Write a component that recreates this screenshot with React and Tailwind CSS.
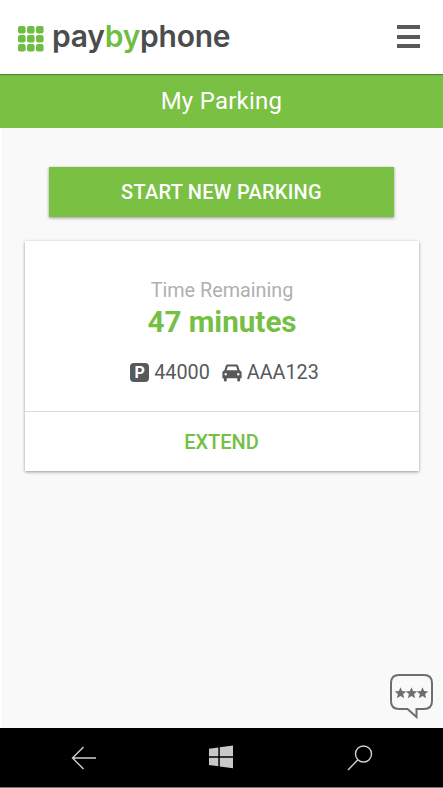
import React from 'react';

const dots = [0, 9, 18];
const star = 'M0-5.8 1.6-2 5.8-1.6 2.6 1.1 3.6 5.2 0 3-3.6 5.2-2.6 1.1-5.8-1.6-1.6-2Z';

function Header() {
  return (
    <header className="relative z-10 flex h-[74px] items-start justify-between bg-white pl-[18px] pr-[23px] shadow-[0_1px_1px_rgba(0,0,0,0.3)]">
      <div className="flex items-start">
        <svg className="mt-[26px] h-[26px] w-[26px]" viewBox="0 0 26 26" fill="#6fbe44">
          {dots.map((y) => dots.map((x) => <rect key={`${x}-${y}`} x={x} y={y} width="7.6" height="7.6" rx="2" />))}
        </svg>
        <div className="ml-[8px] mt-[17px] whitespace-nowrap font-['Inter',sans-serif] text-[30px] leading-[38px] font-semibold tracking-[-0.25px] text-[#4b4c4e]">
          pay<span className="text-[#6fbe44]">by</span>phone
        </div>
      </div>
      <button aria-label="Menu" className="mt-[25px] flex w-[23px] flex-col gap-[5px]">
        <span className="h-[4px] bg-[#58595b]" />
        <span className="mt-px h-[4px] bg-[#58595b]" />
        <span className="h-[4px] bg-[#58595b]" />
      </button>
    </header>
  );
}

function Card() {
  return (
    <section className="ml-[25px] mr-[24px] mt-[24px] flex h-[230px] flex-col bg-white text-center shadow-[0_1px_3px_rgba(0,0,0,0.4)]">
      <div className="flex h-[171px] flex-col items-center border-b border-[#dcdcdc] pt-[38px]">
        <div className="text-[19.8px] leading-[24px] text-[#b0b0b0]">Time Remaining</div>
        <div className="mt-px text-[29.6px] leading-[36px] font-bold text-[#74bf44]">47 minutes</div>
        <div className="mt-[20px] flex items-center pl-[5px] text-[19.8px] leading-[24px] text-[#58595b]">
          <span className="flex h-[19px] w-[19px] items-center justify-center rounded-[4px] bg-[#58595b] text-[16px] leading-[19px] font-bold text-white">P</span>
          <span className="ml-[5px] pt-px">44000</span>
          <svg className="ml-[12px] h-[20px] w-[20px]" viewBox="0 0 20 20" fill="#58595b">
            <path fillRule="evenodd" d="M5.4 1.5H14.6Q15.8 1.5 16.2 2.7L17.6 7.2Q19.6 7.8 19.6 9.6V15.2H18.2V17Q18.2 18.5 16.7 18.5T15.2 17V15.2H4.8V17Q4.8 18.5 3.3 18.5T1.8 17V15.2H.4V9.6Q.4 7.8 2.4 7.2L3.8 2.7Q4.2 1.5 5.4 1.5ZM5.8 3.4 4.6 7.2H15.4L14.2 3.4ZM3.7 10a1.2 1.2 0 1 0 0 2.4 1.2 1.2 0 0 0 0-2.4ZM16.3 10a1.2 1.2 0 1 0 0 2.4 1.2 1.2 0 0 0 0-2.4Z" />
          </svg>
          <span className="ml-[5px] pt-px">AAA123</span>
        </div>
      </div>
      <button className="flex-1 pr-px text-[20px] font-medium text-[#74bf44]">EXTEND</button>
    </section>
  );
}

function NavBar() {
  return (
    <nav className="flex h-[60px] items-start justify-between border-b border-[#777] bg-black pl-[71px] pr-[70px]">
      <svg className="mt-[18px] h-[24px] w-[26px]" viewBox="0 0 26 24" fill="none" stroke="#cfcfcf" strokeWidth="1.4">
        <path d="M25 12H1.5M12.5 1 1.5 12l11 11" />
      </svg>
      <svg className="ml-[-3px] mt-[17px] h-[24px] w-[24px]" viewBox="0 0 24 24" fill="#c8c8c8">
        <path d="M0 3.7 9.3 2.4v8.8H0ZM10.8 2.2 24 .6v10.6H10.8ZM0 12.7h9.3v8.5L0 20ZM10.8 12.7H24V23.3L10.8 21.6Z" />
      </svg>
      <svg className="mt-[17px] h-[26px] w-[26px]" viewBox="0 0 26 26" fill="none" stroke="#cfcfcf" strokeWidth="1.4">
        <circle cx="16.5" cy="9" r="8" />
        <path d="M10.8 14.8 1 25" />
      </svg>
    </nav>
  );
}

export default function App() {
  return (
    <div className="flex h-[788px] w-[443px] flex-col overflow-hidden bg-[#f9f9f9] font-['Roboto',sans-serif]">
      <Header />
      <div className="h-[54px] bg-[#79c043] text-center text-[24px] leading-[54px] tracking-[0.25px] text-white">My Parking</div>
      <main className="flex flex-1 flex-col border-x-2 border-white">
        <button className="mx-[47px] mt-[39px] h-[50px] bg-[#79c043] text-[20px] font-medium tracking-[0.25px] text-white shadow-[0_1px_3px_rgba(0,0,0,0.4)]">START NEW PARKING</button>
        <div className="-mx-[2px]"><Card /></div>
        <svg className="mt-auto mr-[7px] mb-[9px] h-[46px] w-[46px] self-end" viewBox="0 0 46 46" fill="none" stroke="#6d6e71" strokeWidth="2">
          <path d="M11 2H36Q44 2 44 10V28Q44 36 36 36H28.5V44L19.5 36H11Q3 36 3 28V10Q3 2 11 2Z" />
          <g fill="#6d6e71" stroke="none">
            <path transform="translate(12.5 20)" d={star} />
            <path transform="translate(23.5 20)" d={star} />
            <path transform="translate(34.5 20)" d={star} />
          </g>
        </svg>
      </main>
      <NavBar />
    </div>
  );
}
